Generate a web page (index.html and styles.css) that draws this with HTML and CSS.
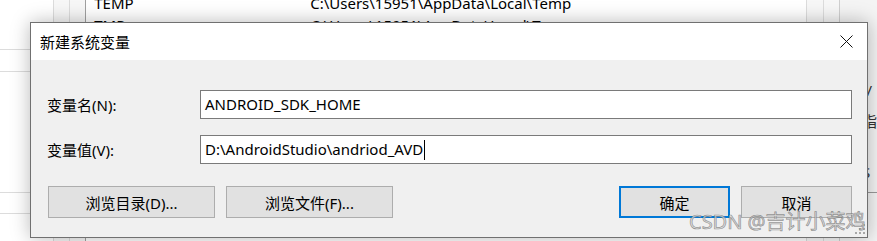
FILE: index.html
```html
<!DOCTYPE html>
<html lang="zh-CN">
<head>
    <meta charset="UTF-8">
    <title>新建系统变量</title>
    <link rel="stylesheet" href="styles.css">
</head>
<body>
    <div class="desktop">
        <div class="bg-grid">
            <div class="grid-row r1"></div>
            <div class="grid-row r2"></div>
            <div class="grid-row r3"></div>
            <div class="grid-row r4"></div>
        </div>
        <div class="bg-col c1"></div>
        <div class="bg-col c2"></div>
        <div class="bg-list">
            <div class="list-row"><span class="var-name">TEMP</span><span>C:\Users\15951\AppData\Local\Temp</span></div>
            <div class="list-row"><span class="var-name">TMP</span><span>C:\Users\15951\AppData\Local\Temp</span></div>
        </div>
        <div class="bg-col c3"></div>
        <div class="bg-col c4"></div>
        <div class="bg-side">
            <div class="side-text t1">(/</div>
            <div class="side-text t2">指</div>
            <div class="side-text t3">S</div>
        </div>
    </div>

    <div class="dialog">
        <div class="titlebar">
            <span class="title">新建系统变量</span>
            <span class="close">
                <svg width="13" height="13" viewBox="0 0 13 13"><path d="M0.5 0.5 L12.5 12.5 M12.5 0.5 L0.5 12.5" stroke="#111" stroke-width="1" fill="none"/></svg>
            </span>
        </div>
        <div class="dlg-body">
            <div class="field">
                <label>变量名(N):</label>
                <div class="input">ANDROID_SDK_HOME</div>
            </div>
            <div class="field">
                <label>变量值(V):</label>
                <div class="input">D:\AndroidStudio\andriod_AVD<span class="caret"></span></div>
            </div>
            <div class="button-row">
                <div class="btn-group">
                    <button class="btn wide">浏览目录(D)...</button>
                    <button class="btn wide">浏览文件(F)...</button>
                </div>
                <div class="btn-group">
                    <button class="btn default">确定</button>
                    <button class="btn">取消</button>
                </div>
            </div>
        </div>
        <div class="grip">
            <svg width="10" height="10" viewBox="0 0 10 10" fill="#a8a8a8">
                <rect x="8" y="0" width="2" height="2"/>
                <rect x="4" y="4" width="2" height="2"/><rect x="8" y="4" width="2" height="2"/>
                <rect x="0" y="8" width="2" height="2"/><rect x="4" y="8" width="2" height="2"/><rect x="8" y="8" width="2" height="2"/>
            </svg>
        </div>
    </div>

    <div class="watermark">CSDN @吉计小菜鸡</div>
</body>
</html>
```
FILE: styles.css
```css
body {
    margin: 0;
    width: 877px;
    height: 241px;
    overflow: hidden;
    position: relative;
    background-color: #fff;
    font-family: "Noto Sans", "Noto Sans CJK SC", sans-serif;
    font-size: 15px;
    color: #000;
}
.desktop {
    display: flex;
    height: 241px;
}
.bg-grid {
    width: 53px;
    border-right: 1px solid #dcdcdc;
}
.grid-row {
    border-bottom: 1px solid #dcdcdc;
}
.grid-row.r1 { height: 49px; }
.grid-row.r2 { height: 21px; }
.grid-row.r3 { height: 120px; }
.grid-row.r4 { height: 20px; }
.bg-col {
    background-color: #f7f7f7;
}
.bg-col.c1 {
    width: 16px;
    border-right: 1px solid #dcdcdc;
}
.bg-col.c2 {
    width: 15px;
    border-right: 1px solid #a0a0a0;
}
.bg-list {
    width: 727px;
    margin-top: -8px;
    border-right: 1px solid #dcdcdc;
}
.list-row {
    display: flex;
    height: 22px;
    line-height: 22px;
    padding-left: 8px;
}
.var-name {
    width: 216px;
}
.bg-col.c3 {
    width: 16px;
    border-right: 1px solid #dcdcdc;
}
.bg-col.c4 {
    width: 15px;
    border-right: 1px solid #cfcfcf;
}
.bg-side {
    flex: 1;
    background-color: #f4f4f4;
    padding-left: 22px;
}
.side-text {
    height: 30px;
    color: #333;
}
.side-text.t1 { margin-top: 80px; }
.side-text.t3 { margin-top: 22px; border-bottom: 1px solid #999; }

.dialog {
    position: absolute;
    left: 30px;
    top: 22px;
    width: 836px;
    height: 214px;
    border: 1px solid #707070;
    background-color: #f0f0f0;
    box-shadow: 0 0 18px rgba(0, 0, 0, 0.28);
    font-family: "Noto Sans", "Noto Sans CJK SC", sans-serif;
}
.titlebar {
    height: 37px;
    background-color: #fff;
    display: flex;
    align-items: center;
    justify-content: space-between;
    padding-left: 9px;
    padding-right: 14px;
}
.title {
    font-size: 15px;
}
.close {
    display: flex;
    width: 13px;
    height: 13px;
}
.dlg-body {
    padding: 30px 15px 0 16px;
}
.field {
    display: flex;
    align-items: center;
    margin-bottom: 16px;
}
.field label {
    width: 153px;
    font-size: 15px;
}
.input {
    flex: 1;
    height: 27px;
    border: 1px solid #7a7a7a;
    background-color: #fff;
    line-height: 27px;
    padding-left: 4px;
    font-size: 15px;
    display: flex;
    align-items: center;
}
.caret {
    width: 1px;
    height: 20px;
    background-color: #000;
    margin-left: 1px;
}
.button-row {
    display: flex;
    justify-content: space-between;
    margin-top: 22px;
    padding-left: 1px;
}
.btn-group {
    display: flex;
    gap: 11px;
}
.btn {
    height: 32px;
    width: 111px;
    border: 1px solid #adadad;
    background-color: #e1e1e1;
    font-family: "Noto Sans", "Noto Sans CJK SC", sans-serif;
    font-size: 15px;
    color: #000;
    padding: 0;
}
.btn.wide {
    width: 167px;
}
.btn.default {
    border: 2px solid #0078d7;
}
.grip {
    position: absolute;
    right: 2px;
    bottom: 3px;
    display: flex;
}
.watermark {
    position: absolute;
    left: 689px;
    top: 211px;
    font-family: "Noto Sans", "Noto Sans CJK SC", sans-serif;
    font-size: 20px;
    line-height: 22px;
    color: rgba(215, 215, 215, 0.8);
    -webkit-text-stroke: 0.7px rgba(100, 100, 100, 0.65);
    white-space: nowrap;
}
```
